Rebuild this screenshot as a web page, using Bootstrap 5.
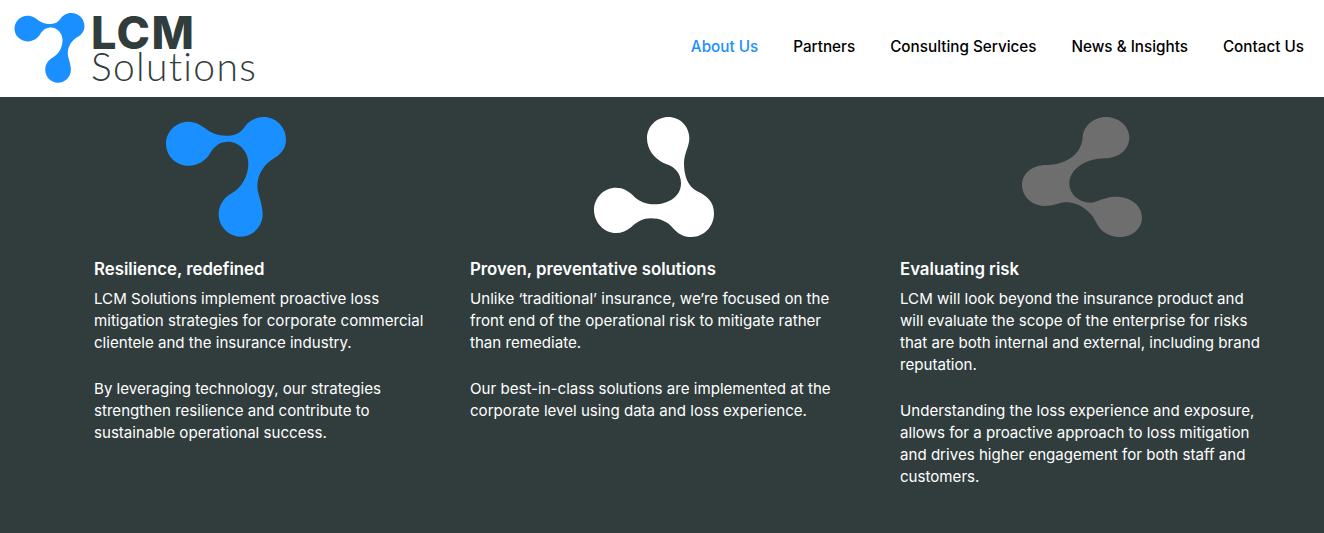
<!DOCTYPE html>
<html lang="en">
<head>
    <meta charset="UTF-8">
    <meta name="viewport" content="width=device-width, initial-scale=1">
    <title>LCM Solutions</title>
    <link href="https://cdn.jsdelivr.net/npm/bootstrap@5.3.0/dist/css/bootstrap.min.css" rel="stylesheet">
    <style>
        body { font-family: "Inter", "Liberation Sans", sans-serif; background: #313d3d; }
        .site-bar { height: 97px; padding: 0 20px 0 14px; }
        .brand-box { width: 245px; gap: 6px; padding: 0; margin: -2px 0 0; }
        .brand-words { color: #313d3d; line-height: 1; }
        .brand-top { display: block; font-family: "Inter", sans-serif; font-weight: 800; font-size: 45px; line-height: 36px; letter-spacing: 1.4px; padding-top: 2px; }
        .brand-bottom { display: block; font-family: "Lato", sans-serif; font-weight: 300; font-size: 39px; line-height: 34px; letter-spacing: 1.3px; margin-top: -2px; }
        .site-links { gap: 35px; margin-top: -2px; }
        .site-bar .site-links .nav-link { padding: 0; color: #000; font-size: 15.25px; font-weight: 500; }
        .site-bar .site-links .nav-link.active { color: #1a8fff; }
        .dark-band { min-height: calc(100vh - 97px); padding: 20px 28px 0 12px; color: #fff; }
        .dark-band .row { --bs-gutter-x: 0; }
        .blob { width: 120px; height: 120px; display: block; margin: 0 auto 20px; }
        .info-text { font-size: 15.1px; line-height: 22px; }
        .info-text h2 { font-size: 16.8px; line-height: 24px; font-weight: 600; margin: 0 0 7px; }
        .info-text p { margin: 0 0 24px; }
        .first-col { margin-left: 82px; width: 345px; }
        .second-col { margin-left: 30px; width: 372px; }
        .third-col { margin-left: 32px; width: 368px; }
    </style>
</head>
<body>
    <nav class="navbar navbar-expand bg-white site-bar">
        <a class="navbar-brand d-flex align-items-center brand-box" href="#">
            <svg width="71" height="70" viewBox="48 36 360 360"><path fill="#1a8fff" d="M115 50 C140 50 155 62 170 73 C185 85 205 92 228 92 C250 92 268 88 282 68 C294 50 315 36 340 36 C378 36 408 66 408 104 C408 130 392 148 372 160 C345 176 322 205 322 245 C322 265 338 295 338 328 C338 365 308 395 272 395 C236 395 206 365 206 328 C206 300 222 278 245 265 C275 248 295 215 295 175 C295 140 268 110 235 110 C210 110 195 122 183 140 C170 165 145 182 115 182 C78 182 48 152 48 116 C48 80 78 50 115 50Z"/></svg>
            <span class="brand-words"><span class="brand-top">LCM</span><span class="brand-bottom">Solutions</span></span>
        </a>
        <ul class="navbar-nav ms-auto site-links">
            <li class="nav-item"><a class="nav-link active" href="#">About Us</a></li>
            <li class="nav-item"><a class="nav-link" href="#">Partners</a></li>
            <li class="nav-item"><a class="nav-link" href="#">Consulting Services</a></li>
            <li class="nav-item"><a class="nav-link" href="#">News &amp; Insights</a></li>
            <li class="nav-item"><a class="nav-link" href="#">Contact Us</a></li>
        </ul>
    </nav>

    <section class="dark-band">
        <div class="row">
            <div class="col-4">
                <svg class="blob" viewBox="48 36 360 360"><path fill="#1a8fff" d="M115 50 C140 50 155 62 170 73 C185 85 205 92 228 92 C250 92 268 88 282 68 C294 50 315 36 340 36 C378 36 408 66 408 104 C408 130 392 148 372 160 C345 176 322 205 322 245 C322 265 338 295 338 328 C338 365 308 395 272 395 C236 395 206 365 206 328 C206 300 222 278 245 265 C275 248 295 215 295 175 C295 140 268 110 235 110 C210 110 195 122 183 140 C170 165 145 182 115 182 C78 182 48 152 48 116 C48 80 78 50 115 50Z"/></svg>
                <div class="info-text first-col">
                    <h2>Resilience, redefined</h2>
                    <p>LCM Solutions implement proactive loss mitigation strategies for corporate commercial clientele and the insurance industry.</p>
                    <p>By leveraging technology, our strategies strengthen resilience and contribute to sustainable operational success.</p>
                </div>
            </div>
            <div class="col-4">
                <svg class="blob" viewBox="42 36 360 360"><path fill="#fff" d="M265 36 C300 36 328 64 328 100 C328 125 312 145 312 175 C312 215 325 245 350 258 C380 272 402 290 402 325 C402 365 372 396 335 396 C310 396 292 385 278 368 C262 350 240 340 212 340 C190 340 172 350 155 365 C140 378 125 384 108 384 C72 384 42 352 42 315 C42 278 72 248 108 248 C130 248 145 258 160 272 C175 288 195 298 225 298 C265 298 303 275 303 235 C303 205 285 185 258 177 C225 165 201 135 201 100 C201 64 230 36 265 36Z"/></svg>
                <div class="info-text second-col">
                    <h2>Proven, preventative solutions</h2>
                    <p>Unlike ‘traditional’ insurance, we’re focused on the front end of the operational risk to mitigate rather than remediate.</p>
                    <p>Our best-in-class solutions are implemented at the corporate level using data and loss experience.</p>
                </div>
            </div>
            <div class="col-4">
                <svg class="blob" viewBox="36 36 360 360"><path fill="#6e6e6e" d="M288 36 C326 36 358 64 358 97 C358 132 328 160 285 160 C225 160 178 195 178 235 C178 270 210 293 240 293 C262 293 280 275 318 275 C360 275 396 300 396 338 C396 372 365 396 328 396 C295 396 270 378 258 352 C245 320 205 290 165 292 C145 294 130 303 105 303 C67 303 36 275 36 240 C36 205 67 180 110 180 C165 180 215 150 218 97 C220 64 250 36 288 36Z"/></svg>
                <div class="info-text third-col">
                    <h2>Evaluating risk</h2>
                    <p>LCM will look beyond the insurance product and will evaluate the scope of the enterprise for risks that are both internal and external, including brand reputation.</p>
                    <p>Understanding the loss experience and exposure, allows for a proactive approach to loss mitigation and drives higher engagement for both staff and customers.</p>
                </div>
            </div>
        </div>
    </section>

    <script src="https://cdn.jsdelivr.net/npm/bootstrap@5.3.0/dist/js/bootstrap.bundle.min.js"></script>
</body>
</html>
